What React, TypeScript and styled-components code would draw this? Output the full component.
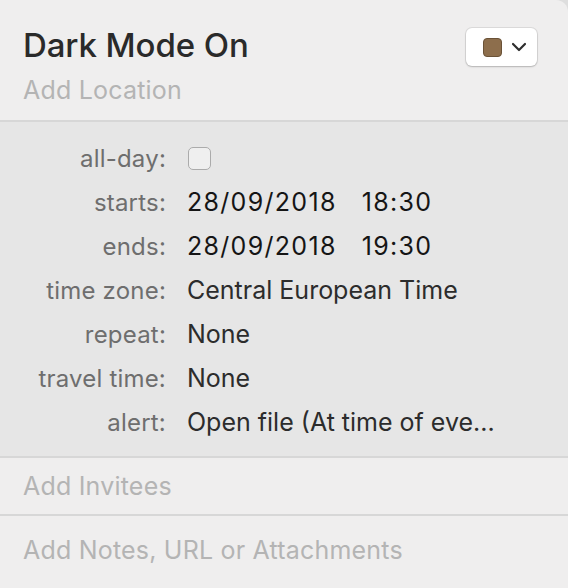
import React from 'react';
import styled, { createGlobalStyle } from 'styled-components';

const GlobalStyle = createGlobalStyle`
  html, body {
    margin: 0;
    padding: 0;
    background: #dedede;
  }
  body {
    font-family: Inter, "Liberation Sans", sans-serif;
    -webkit-font-smoothing: antialiased;
  }
`;

const Panel = styled.div`
  width: 568px;
  height: 588px;
  background: #efeeee;
  border-top-right-radius: 12px;
  overflow: hidden;
  display: flex;
  flex-direction: column;
`;

const Header = styled.div`
  height: 122px;
  box-sizing: border-box;
  padding: 22px 31px 0 23px;
  display: flex;
  align-items: flex-start;
  justify-content: space-between;
  border-bottom: 2px solid #d7d7d7;
`;

const TitleBlock = styled.div`
  display: flex;
  flex-direction: column;
`;

const Title = styled.div`
  font-size: 33px;
  font-weight: 500;
  color: #2a2a2a;
  line-height: 46px;
  letter-spacing: -0.1px;
`;

const Placeholder = styled.div`
  font-size: 25px;
  color: #b4b4b4;
  line-height: 44px;
  letter-spacing: 0.2px;
`;

const ColorButton = styled.div`
  margin-top: 6px;
  width: 71px;
  height: 38px;
  box-sizing: border-box;
  background: #ffffff;
  border-radius: 6px;
  box-shadow: 0 0 0 1px rgba(0, 0, 0, 0.08), 0 1px 2px rgba(0, 0, 0, 0.18);
  display: flex;
  align-items: center;
  padding-left: 17px;
  gap: 9px;
`;

const Swatch = styled.div`
  width: 19px;
  height: 19px;
  box-sizing: border-box;
  border-radius: 4px;
  background: #8d6e4c;
  border: 1.5px solid #6a5237;
`;

const Details = styled.div`
  background: #e6e6e6;
  padding: 14px 0 12px;
  display: grid;
  grid-template-columns: 166px 1fr;
  column-gap: 21px;
  grid-auto-rows: 44px;
  border-bottom: 2px solid #d7d7d7;
`;

const Label = styled.div`
  font-size: 24px;
  color: #6e6e6e;
  display: flex;
  align-items: center;
  justify-content: flex-end;
  white-space: nowrap;
  letter-spacing: 0.2px;
`;

const Value = styled.div<{ strong?: boolean }>`
  font-size: 25px;
  color: ${(p) => (p.strong ? '#151515' : '#2c2c2c')};
  display: flex;
  align-items: center;
  gap: 25px;
  white-space: nowrap;
`;

const Digits = styled.span`
  letter-spacing: 1.3px;
`;

const Checkbox = styled.div`
  width: 23px;
  height: 23px;
  box-sizing: border-box;
  border: 1.5px solid #ababab;
  border-radius: 5px;
  background: #efefef;
  margin-left: 1px;
`;

const Section = styled.div<{ h: number; bordered?: boolean }>`
  height: ${(p) => p.h}px;
  box-sizing: border-box;
  padding: 0 0 ${(p) => (p.bordered ? 0 : 5)}px 23px;
  display: flex;
  align-items: center;
  border-bottom: ${(p) => (p.bordered ? '2px solid #d7d7d7' : 'none')};
`;

const Chevron = () => (
  <svg width="16" height="10" viewBox="0 0 16 10">
    <path d="M2 2 L8 8 L14 2" fill="none" stroke="#2e2e2e" strokeWidth="2.2" strokeLinecap="round" strokeLinejoin="round" />
  </svg>
);

const rows: [string, string][] = [
  ['time zone:', 'Central European Time'],
  ['repeat:', 'None'],
  ['travel time:', 'None'],
  ['alert:', 'Open file (At time of eve...'],
];

export default function App() {
  return (
    <>
      <GlobalStyle />
      <Panel>
        <Header>
          <TitleBlock>
            <Title>Dark Mode On</Title>
            <Placeholder>Add Location</Placeholder>
          </TitleBlock>
          <ColorButton>
            <Swatch />
            <Chevron />
          </ColorButton>
        </Header>
        <Details>
          <Label>all-day:</Label>
          <Value>
            <Checkbox />
          </Value>
          <Label>starts:</Label>
          <Value strong>
            <Digits>28/09/2018</Digits>
            <Digits>18:30</Digits>
          </Value>
          <Label>ends:</Label>
          <Value strong>
            <Digits>28/09/2018</Digits>
            <Digits>19:30</Digits>
          </Value>
          {rows.map(([l, v]) => (
            <React.Fragment key={l}>
              <Label>{l}</Label>
              <Value>{v}</Value>
            </React.Fragment>
          ))}
        </Details>
        <Section h={58} bordered>
          <Placeholder>Add Invitees</Placeholder>
        </Section>
        <Section h={72}>
          <Placeholder>Add Notes, URL or Attachments</Placeholder>
        </Section>
      </Panel>
    </>
  );
}
